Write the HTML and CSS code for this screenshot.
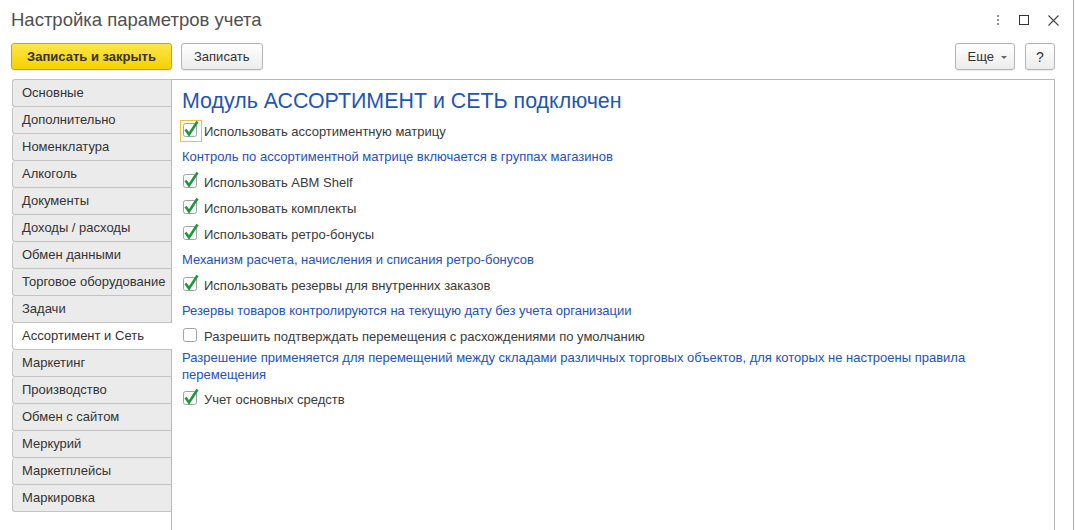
FILE: index.html
```html
<!DOCTYPE html>
<html lang="ru">
<head>
    <meta charset="UTF-8">
    <title>Настройка параметров учета</title>
    <link rel="stylesheet" href="styles.css">
</head>
<body>
    <div class="window">
        <!-- Title bar -->
        <div class="titlebar">
            <h1 class="title">Настройка параметров учета</h1>
            <div class="win-controls">
                <svg width="4" height="12" viewBox="0 0 4 12"><circle cx="2" cy="2" r="1.1" fill="#777"/><circle cx="2" cy="6" r="1.1" fill="#777"/><circle cx="2" cy="10" r="1.1" fill="#777"/></svg>
                <svg width="10" height="10" viewBox="0 0 10 10"><rect x="0.5" y="0.5" width="9" height="9" fill="none" stroke="#333"/></svg>
                <svg width="11" height="11" viewBox="0 0 11 11"><path d="M0.5 0.5 L10.5 10.5 M10.5 0.5 L0.5 10.5" stroke="#444" stroke-width="1.1"/></svg>
            </div>
        </div>

        <!-- Command bar -->
        <div class="toolbar">
            <div class="toolbar-group">
                <button class="btn btn-primary">Записать и закрыть</button>
                <button class="btn">Записать</button>
            </div>
            <div class="toolbar-group">
                <button class="btn btn-more">Еще <span class="caret"></span></button>
                <button class="btn btn-help">?</button>
            </div>
        </div>

        <div class="panel">
            <ul class="tabs">
                <li>Основные</li>
                <li>Дополнительно</li>
                <li>Номенклатура</li>
                <li>Алкоголь</li>
                <li>Документы</li>
                <li>Доходы / расходы</li>
                <li>Обмен данными</li>
                <li>Торговое оборудование</li>
                <li>Задачи</li>
                <li class="active">Ассортимент и Сеть</li>
                <li>Маркетинг</li>
                <li>Производство</li>
                <li>Обмен с сайтом</li>
                <li>Меркурий</li>
                <li>Маркетплейсы</li>
                <li>Маркировка</li>
            </ul>

            <div class="content">
                <h2 class="heading">Модуль АССОРТИМЕНТ и СЕТЬ подключен</h2>

                <label class="row">
                    <span class="check focused"><svg width="22" height="22" viewBox="0 0 22 22"><rect x="3.5" y="3.5" width="13" height="13" rx="2" fill="#fff" stroke="#a3a3a3"/><path d="M5.5 9.5 L9 14.5 L17.5 1.5" fill="none" stroke="#1a9a3c" stroke-width="2.6"/></svg></span>
                    Использовать ассортиментную матрицу
                </label>
                <div class="note">Контроль по ассортиментной матрице включается в группах магазинов</div>

                <label class="row">
                    <span class="check"><svg width="22" height="22" viewBox="0 0 22 22"><rect x="3.5" y="3.5" width="13" height="13" rx="2" fill="#fff" stroke="#a3a3a3"/><path d="M5.5 9.5 L9 14.5 L17.5 1.5" fill="none" stroke="#1a9a3c" stroke-width="2.6"/></svg></span>
                    Использовать ABM Shelf
                </label>
                <label class="row">
                    <span class="check"><svg width="22" height="22" viewBox="0 0 22 22"><rect x="3.5" y="3.5" width="13" height="13" rx="2" fill="#fff" stroke="#a3a3a3"/><path d="M5.5 9.5 L9 14.5 L17.5 1.5" fill="none" stroke="#1a9a3c" stroke-width="2.6"/></svg></span>
                    Использовать комплекты
                </label>
                <label class="row">
                    <span class="check"><svg width="22" height="22" viewBox="0 0 22 22"><rect x="3.5" y="3.5" width="13" height="13" rx="2" fill="#fff" stroke="#a3a3a3"/><path d="M5.5 9.5 L9 14.5 L17.5 1.5" fill="none" stroke="#1a9a3c" stroke-width="2.6"/></svg></span>
                    Использовать ретро-бонусы
                </label>
                <div class="note">Механизм расчета, начисления и списания ретро-бонусов</div>

                <label class="row">
                    <span class="check"><svg width="22" height="22" viewBox="0 0 22 22"><rect x="3.5" y="3.5" width="13" height="13" rx="2" fill="#fff" stroke="#a3a3a3"/><path d="M5.5 9.5 L9 14.5 L17.5 1.5" fill="none" stroke="#1a9a3c" stroke-width="2.6"/></svg></span>
                    Использовать резервы для внутренних заказов
                </label>
                <div class="note">Резервы товаров контролируются на текущую дату без учета организации</div>

                <label class="row">
                    <span class="check"><svg width="22" height="22" viewBox="0 0 22 22"><rect x="3.5" y="3.5" width="13" height="13" rx="2" fill="#fff" stroke="#a3a3a3"/></svg></span>
                    Разрешить подтверждать перемещения с расхождениями по умолчанию
                </label>
                <div class="note note-wide">Разрешение применяется для перемещений между складами различных торговых объектов, для которых не настроены правила перемещения</div>

                <label class="row">
                    <span class="check"><svg width="22" height="22" viewBox="0 0 22 22"><rect x="3.5" y="3.5" width="13" height="13" rx="2" fill="#fff" stroke="#a3a3a3"/><path d="M5.5 9.5 L9 14.5 L17.5 1.5" fill="none" stroke="#1a9a3c" stroke-width="2.6"/></svg></span>
                    Учет основных средств
                </label>
            </div>
        </div>
    </div>
</body>
</html>
```

FILE: styles.css
```css
* {
    margin: 0;
    padding: 0;
    box-sizing: border-box;
}

body {
    font-family: "Liberation Sans", Arial, sans-serif;
    font-size: 13px;
    color: #333;
    background: #fff;
    overflow: hidden;
}

.window {
    width: 1074px;
    height: 530px;
    border-right: 1px solid #a9a9a9;
    padding: 0 18px 0 11px;
    display: flex;
    flex-direction: column;
}

/* title bar */
.titlebar {
    height: 43px;
    display: flex;
    justify-content: space-between;
    padding-top: 9px;
}

.title {
    font-size: 18.5px;
    font-weight: normal;
    line-height: 22px;
    color: #505050;
}

.win-controls {
    display: flex;
    align-items: center;
    gap: 19px;
    height: 22px;
    margin-right: -4px;
}

/* command bar */
.toolbar {
    display: flex;
    justify-content: space-between;
    height: 36px;
}

.toolbar-group {
    display: flex;
    gap: 9px;
}

.btn {
    height: 27px;
    padding: 0 12px;
    font-family: inherit;
    font-size: 13px;
    color: #333;
    background: linear-gradient(#ffffff, #ececec);
    border: 1px solid #b4b4b4;
    border-radius: 3px;
    box-shadow: 0 1px 1px rgba(0, 0, 0, 0.08);
}

.btn-primary {
    width: 161px;
    font-weight: bold;
    background: linear-gradient(#fde64a, #f4d200);
    border-color: #c8a800;
}

.btn-more {
    width: 60px;
    padding: 0 0 0 4px;
    margin-right: 1px;
}

.caret {
    display: inline-block;
    width: 0;
    height: 0;
    margin-left: 3px;
    vertical-align: middle;
    border-left: 3px solid transparent;
    border-right: 3px solid transparent;
    border-top: 3px solid #666;
}

.btn-help {
    width: 30px;
    padding: 0;
    font-size: 14px;
}

/* tabs + page */
.panel {
    flex: 1;
    display: flex;
    margin-left: 1px;
}

.tabs {
    list-style: none;
    width: 159px;
    flex-shrink: 0;
}

.tabs li {
    height: 27px;
    line-height: 26px;
    padding-left: 9px;
    background: #ebebeb;
    border: 1px solid #c3c3c3;
    border-top: none;
    border-right: none;
    border-radius: 3px 0 0 3px;
    color: #333;
    white-space: nowrap;
}

.tabs li:first-child {
    height: 28px;
    border-top: 1px solid #c3c3c3;
}

.tabs li.active {
    position: relative;
    background: #fff;
    margin-right: -1px;
}

.content {
    flex: 1;
    border: 1px solid #b9b9b9;
    border-bottom: none;
    padding: 9px 10px 0 10px;
}

.heading {
    font-size: 21.4px;
    font-weight: normal;
    line-height: 24px;
    color: #1f55b5;
    margin-bottom: 5px;
}

.row {
    display: flex;
    align-items: center;
    height: 26px;
    gap: 2px;
    color: #3a3a3a;
}

.check {
    width: 22px;
    height: 22px;
    margin-left: -2px;
    border: 1px solid transparent;
    display: flex;
}

.check svg {
    margin: -1px;
    overflow: visible;
}

.check.focused {
    border-color: #efc235;
}

.note {
    color: #2452b6;
    line-height: 17px;
    padding: 4px 0;
}

.note-wide {
    padding: 0 0 3px 0;
    max-width: 800px;
}
```
